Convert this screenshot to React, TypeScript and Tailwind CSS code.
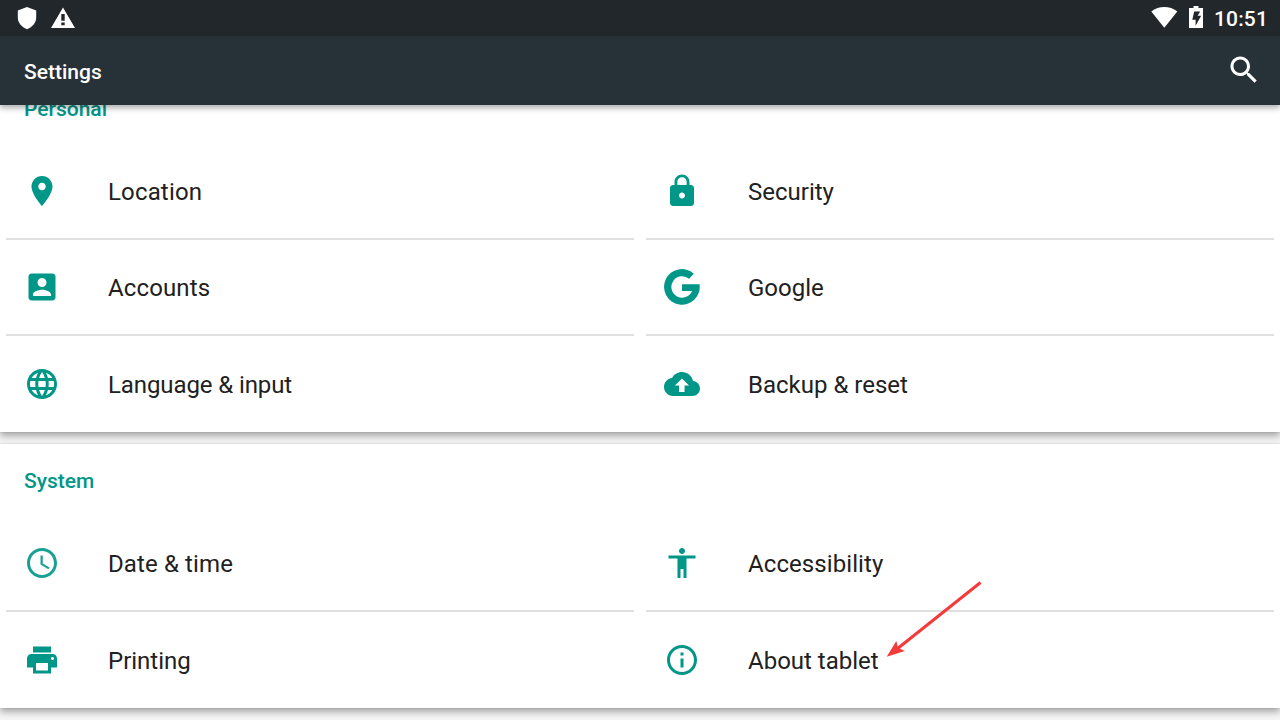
import type { ReactNode } from "react";

const PATHS = {
  location:
    "M12 2C8.13 2 5 5.13 5 9c0 5.25 7 13 7 13s7-7.75 7-13c0-3.87-3.13-7-7-7zm0 9.5c-1.38 0-2.5-1.12-2.5-2.5s1.12-2.5 2.5-2.5 2.5 1.12 2.5 2.5-1.12 2.5-2.5 2.5z",
  security:
    "M18 8h-1V6c0-2.76-2.24-5-5-5S7 3.24 7 6v2H6c-1.1 0-2 .9-2 2v10c0 1.1.9 2 2 2h12c1.1 0 2-.9 2-2V10c0-1.1-.9-2-2-2zm-6 9c-1.1 0-2-.9-2-2s.9-2 2-2 2 .9 2 2-.9 2-2 2zm3.1-9H8.9V6c0-1.71 1.39-3.1 3.1-3.1 1.71 0 3.1 1.39 3.1 3.1v2z",
  accounts:
    "M3 5v14c0 1.1.89 2 2 2h14c1.1 0 2-.9 2-2V5c0-1.1-.9-2-2-2H5c-1.11 0-2 .9-2 2zm12 4c0 1.66-1.34 3-3 3s-3-1.34-3-3 1.34-3 3-3 3 1.34 3 3zm-9 8c0-2 4-3.100 6-3.100s6 1.100 6 3.100v1H6v-1z",
  google:
    "M19.900 3.100A11.900 11.900 0 1 0 23.700 10.200H12v4.400h6.700A7.150 7.150 0 1 1 16.700 6.500z",
  language:
    "M11.99 2C6.47 2 2 6.48 2 12s4.47 10 9.99 10C17.52 22 22 17.52 22 12S17.52 2 11.99 2zm6.93 6h-2.95c-.32-1.25-.78-2.45-1.38-3.56 1.84.63 3.37 1.91 4.33 3.56zM12 4.04c.83 1.2 1.48 2.53 1.91 3.96h-3.82c.43-1.43 1.08-2.76 1.91-3.96zM4.26 14C4.1 13.36 4 12.69 4 12s.1-1.36.26-2h3.38c-.08.66-.14 1.32-.14 2s.06 1.34.14 2H4.26zm.82 2h2.95c.32 1.25.78 2.45 1.38 3.56-1.84-.63-3.37-1.9-4.33-3.56zm2.95-8H5.08c.96-1.66 2.49-2.93 4.33-3.56C8.81 5.55 8.35 6.75 8.03 8zM12 19.96c-.83-1.2-1.48-2.53-1.91-3.96h3.82c-.43 1.43-1.08 2.76-1.91 3.96zM14.34 14H9.66c-.09-.66-.16-1.32-.16-2s.07-1.35.16-2h4.68c.09.65.16 1.32.16 2s-.07 1.34-.16 2zm.25 5.56c.6-1.11 1.06-2.31 1.38-3.56h2.95c-.96 1.65-2.49 2.93-4.33 3.56zM16.36 14c.08-.66.14-1.32.14-2s-.06-1.34-.14-2h3.38c.16.64.26 1.31.26 2s-.1 1.36-.26 2h-3.38z",
  backup:
    "M19.35 10.04C18.67 6.59 15.64 4 12 4 9.11 4 6.6 5.64 5.35 8.04 2.34 8.36 0 10.91 0 14c0 3.31 2.69 6 6 6h13c2.76 0 5-2.24 5-5 0-2.64-2.05-4.78-4.65-4.96zM13.700 13v4.300h-3.700V13H7.300l4.700-4.700 4.700 4.700z",
  clock:
    "M11.99 2C6.47 2 2 6.48 2 12s4.47 10 9.99 10C17.52 22 22 17.52 22 12S17.52 2 11.99 2zM12 20c-4.42 0-8-3.58-8-8s3.58-8 8-8 8 3.58 8 8-3.58 8-8 8zM12.5 7H11v6l5.25 3.15.75-1.23-4.5-2.67z",
  accessibility:
    "M12 2c1.1 0 2 .9 2 2s-.9 2-2 2-2-.9-2-2 .9-2 2-2zm9 7h-6v13h-2v-6h-2v6H9V9H3V7h18v2z",
  printing:
    "M19 8H5c-1.66 0-3 1.34-3 3v6h4v4h12v-4h4v-6c0-1.66-1.34-3-3-3zm-3 11H8v-5h8v5zm3-7c-.55 0-1-.45-1-1s.45-1 1-1 1 .45 1 1-.45 1-1 1zm-1-9H6v4h12V3z",
  info: "M11 17h2v-6h-2v6zm1-15C6.48 2 2 6.48 2 12s4.48 10 10 10 10-4.48 10-10S17.52 2 12 2zm0 18c-4.41 0-8-3.59-8-8s3.59-8 8-8 8 3.59 8 8-3.59 8-8 8zM11 9h2V7h-2v2z",
  search:
    "M15.5 14h-.79l-.28-.27C15.41 12.59 16 11.11 16 9.5 16 5.91 13.09 3 9.5 3S3 5.91 3 9.5 5.91 16 9.5 16c1.61 0 3.09-.59 4.23-1.57l.27.28v.79l5 4.99L20.49 19l-4.99-5zm-6 0C7.01 14 5 11.99 5 9.5S7.01 5 9.5 5 14 7.01 14 9.5 11.99 14 9.5 14z",
};

type IconName = keyof typeof PATHS;

function Icon({ name }: { name: IconName }) {
  return (
    <svg viewBox="0 0 24 24" className="size-9 shrink-0" fill="currentColor" fillRule="evenodd">
      <path d={PATHS[name]} />
    </svg>
  );
}

function StatusBar() {
  return (
    <div className="flex h-9 items-start justify-between bg-[#22272b] text-white">
      <svg width="80" height="36" fill="currentColor">
        <path d="M27 7l9.200 3.400v7.200c0 5-3.600 9.600-9.200 11.600-5.600-2-9.200-6.600-9.200-11.600v-7.200z" />
        <path fillRule="evenodd" d="M63 7.500L75 28H51zM61.300 14v6.800h3.400V14zM61.300 22.400v2.800h3.400v-2.800z" />
      </svg>
      <div className="flex pr-3">
        <svg width="68" height="36" viewBox="1146 0 68 36" fill="currentColor">
          <path d="M1164.300 27.700L1151.300 11.400C1155.200 8.500 1159.600 7 1164.300 7s9.100 1.500 13 4.400z" />
          <path
            fillRule="evenodd"
            d="M1193.500 6h5v2h4.500v20h-14V8h4.500zM1194.200 11.500l-1.900 8.300h3.300v5.900l5.600-10h-3.600l2.600-4.200z"
          />
        </svg>
        <span className="mt-1 text-[21px] leading-[30px] font-medium tracking-[0.15px]">10:51</span>
      </div>
    </div>
  );
}

type RowProps = { icon: IconName; label: string; last?: boolean; tracking?: string };

function Row({ icon, label, last, tracking = "" }: RowProps) {
  return (
    <div className="h-24 px-1.5">
      <div className={`flex h-full items-center pl-[18px] ${last ? "" : "border-b-2 border-[#e0e0e0]"}`}>
        <span className={icon === "clock" ? "text-[#009688]/90" : "text-[#009688]"}>
          <Icon name={icon} />
        </span>
        <span className={`ml-12 pt-0.5 text-2xl text-[#212121] ${tracking}`}>{label}</span>
      </div>
    </div>
  );
}

function Card({ title, children }: { title: string; children: ReactNode }) {
  return (
    <section className="bg-white shadow-[0_4px_7px_rgba(0,0,0,0.32),0_0_2px_rgba(0,0,0,0.12)]">
      <h2 className="flex h-[72px] items-center px-6 pt-1 text-[21px] font-medium text-[#009688]">{title}</h2>
      <div className="grid grid-cols-2">{children}</div>
    </section>
  );
}

export default function App() {
  return (
    <div className="relative flex h-[720px] w-[1280px] flex-col overflow-hidden bg-[#f5f5f5] font-[Roboto,sans-serif]">
      <div className="relative z-10">
        <StatusBar />
        <header className="flex h-[69px] items-center justify-between bg-[#273238] pr-[18px] pl-6 text-white shadow-[0_3px_6px_rgba(0,0,0,0.32)]">
          <h1 className="pt-[5px] text-[21px] font-medium">Settings</h1>
          <div className="pb-0.5">
            <Icon name="search" />
          </div>
        </header>
      </div>
      <main className="-mt-[33px] flex flex-col gap-3">
        <Card title="Personal">
          <Row icon="location" label="Location" tracking="tracking-[0.16px]" />
          <Row icon="security" label="Security" />
          <Row icon="accounts" label="Accounts" tracking="tracking-[0.12px]" />
          <Row icon="google" label="Google" />
          <Row icon="language" label="Language & input" last tracking="tracking-[-0.1px]" />
          <Row icon="backup" label="Backup & reset" last />
        </Card>
        <Card title="System">
          <Row icon="clock" label="Date & time" tracking="tracking-[0.12px]" />
          <Row icon="accessibility" label="Accessibility" tracking="tracking-[0.08px]" />
          <Row icon="printing" label="Printing" last />
          <Row icon="info" label="About tablet" last />
        </Card>
      </main>
      <svg className="absolute top-[576px] left-[880px]" width="108" height="86" viewBox="880 576 108 86">
        <path d="M980.500 582.500L897 649" stroke="#f43b3b" strokeWidth="3" fill="none" />
        <path d="M886.700 656.700L896.300 641L898 647.800L904.800 651z" fill="#f43b3b" />
      </svg>
    </div>
  );
}
